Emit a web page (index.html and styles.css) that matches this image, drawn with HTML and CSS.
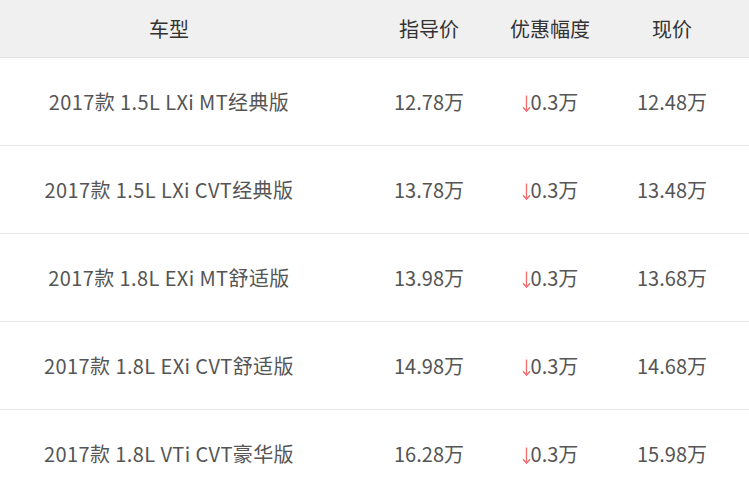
FILE: index.html
```html
<!DOCTYPE html>
<html lang="zh-CN">
<head>
<meta charset="utf-8">
<link rel="stylesheet" href="styles.css">
</head>
<body>
<div class="table">
  <div class="row head">
    <div class="cell c1">车型</div>
    <div class="cell c2">指导价</div>
    <div class="cell c3">优惠幅度</div>
    <div class="cell c4">现价</div>
  </div>
  <div class="row">
    <div class="cell c1">2017款 1.5L LXi MT经典版</div>
    <div class="cell c2">12.78万</div>
    <div class="cell c3"><svg class="down" viewBox="0 0 9 17" width="9" height="17"><path d="M4.5 0.5V16M1 12.2L4.5 16.2L8 12.2"/></svg>0.3万</div>
    <div class="cell c4">12.48万</div>
  </div>
  <div class="row">
    <div class="cell c1">2017款 1.5L LXi CVT经典版</div>
    <div class="cell c2">13.78万</div>
    <div class="cell c3"><svg class="down" viewBox="0 0 9 17" width="9" height="17"><path d="M4.5 0.5V16M1 12.2L4.5 16.2L8 12.2"/></svg>0.3万</div>
    <div class="cell c4">13.48万</div>
  </div>
  <div class="row">
    <div class="cell c1">2017款 1.8L EXi MT舒适版</div>
    <div class="cell c2">13.98万</div>
    <div class="cell c3"><svg class="down" viewBox="0 0 9 17" width="9" height="17"><path d="M4.5 0.5V16M1 12.2L4.5 16.2L8 12.2"/></svg>0.3万</div>
    <div class="cell c4">13.68万</div>
  </div>
  <div class="row">
    <div class="cell c1">2017款 1.8L EXi CVT舒适版</div>
    <div class="cell c2">14.98万</div>
    <div class="cell c3"><svg class="down" viewBox="0 0 9 17" width="9" height="17"><path d="M4.5 0.5V16M1 12.2L4.5 16.2L8 12.2"/></svg>0.3万</div>
    <div class="cell c4">14.68万</div>
  </div>
  <div class="row">
    <div class="cell c1">2017款 1.8L VTi CVT豪华版</div>
    <div class="cell c2">16.28万</div>
    <div class="cell c3"><svg class="down" viewBox="0 0 9 17" width="9" height="17"><path d="M4.5 0.5V16M1 12.2L4.5 16.2L8 12.2"/></svg>0.3万</div>
    <div class="cell c4">15.98万</div>
  </div>
</div>
</body>
</html>
```
FILE: styles.css
```css
html, body {
  margin: 0;
  padding: 0;
  background: #fff;
}
body {
  font-family: "Noto Sans CJK SC", "Noto Sans", sans-serif;
  font-size: 20px;
  color: #555;
  overflow: hidden;
}
.table {
  width: 749px;
}
.row {
  display: grid;
  grid-template-columns: 338px 150px 124px 137px;
  height: 88px;
  align-items: center;
  border-bottom: 1px solid #e6e6e6;
  box-sizing: border-box;
}
.row.head {
  height: 58px;
  background: #f0f0f0;
  color: #333;
  border-bottom: 1px solid #e4e4e4;
}
.cell {
  text-align: center;
  white-space: nowrap;
}
.row .c1 {
  letter-spacing: 0.4px;
}
.row.head .c1 {
  letter-spacing: 0;
}
.c2 {
  padding-left: 32px;
}
.c4 {
  padding-right: 17px;
}
.down {
  fill: none;
  stroke: #f07070;
  stroke-width: 1.4;
  vertical-align: -2px;
  margin-right: 0;
}
```
